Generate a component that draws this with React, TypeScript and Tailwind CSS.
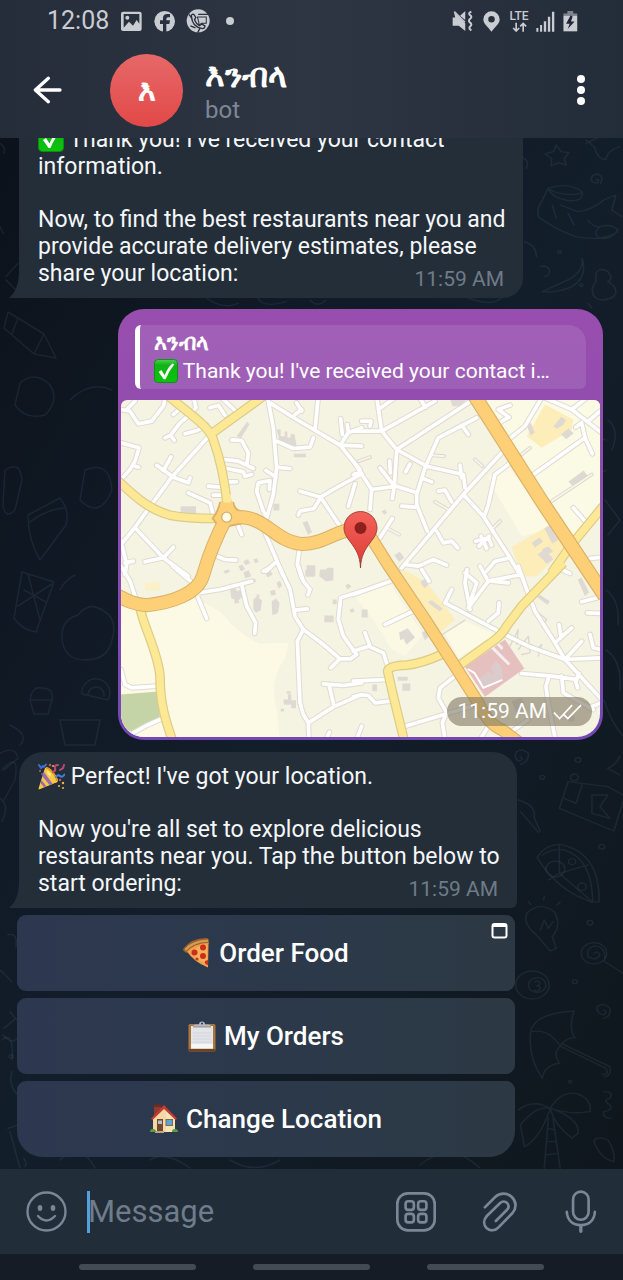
import type { ReactNode } from "react";

type Quadrant = { x: number; y: number; minor: string; yellow?: string; orange?: string; blocks?: string };

const quadrants: Quadrant[] = [
  {
    x: 110,
    y: 395,
    minor:
      "M33 45L60 50L85 88L125 80L160 35L168 5M50 45L75 20M165 130L182 122L210 85L240 60L258 40L250 5M182 122L193 138M190 60L210 42M225 118L262 108L290 92M300 40L325 32L345 62M335 10L375 48M292 130L185 248L70 405L33 450M33 145L87 160L75 200L60 225L33 255M68 213L86 218M140 212L190 248L235 265L240 250M160 228L183 187M235 295L300 325L308 355M295 275L330 278M310 302L338 302M350 262L380 262M365 136L395 138L415 175L410 212M345 195L385 200L430 222M350 222L400 232L405 245L425 240M475 20L490 100L500 220L490 300L470 370M480 25L560 75L690 152L750 225M625 5L615 105M690 152L755 155M690 152L715 115L755 100M692 72L697 120M715 115L712 90M500 140L550 162L600 158L610 130M500 218L540 222M468 228L498 248M478 285L480 258L445 265L440 290L460 350L470 370M755 238L670 285L632 308L570 290M632 308L688 392M632 310L612 342L570 350L565 362M735 268L715 335M75 400L160 490L235 545M160 490L190 458M160 490L105 502M33 440L50 510L45 540M45 505L70 500M320 485L345 495L378 497M383 390L395 420M465 415L495 485L520 545M495 505L468 530M568 465L562 510L575 550M555 60L575 45M560 25L575 50",
    yellow:
      "M170 0C240 60 290 90 308 130C330 190 345 250 352 340M308 115L460 5M20 255C90 320 120 345 180 362C230 372 280 372 320 372",
    orange:
      "M740 402C680 405 640 452 570 448C500 440 470 375 400 368L350 368C322 420 300 470 280 540C265 600 180 625 110 632C70 630 45 615 20 602",
    blocks:
      "M380 125L412 82L418 90L392 132zM500 105l12 0l0 20l12 0l0-14l8 0l0 18l10 0l0-12l12 4l6 34l-50-10zM552 178h36v10h-36zM212 335h46v22h-46zM490 328h18v20h-18zM578 385l14-6l14 34l-12 8zM400 500l14-6l6 12l-14 6zM385 515l12-5l8 14l-12 6zM430 495l10-4l6 10l-10 6zM590 512h26v30h-26zM650 520h20v24h-20zM340 530l16-6l4 8l-14 6z",
  },
  {
    x: 355,
    y: 395,
    minor:
      "M65 5L80 110L-5 110M80 110L125 165L215 215L325 240L330 280M70 45L120 10M80 110L240 20M125 165L345 22M365 70L250 130L210 220L185 300L185 330L217 410M185 295L125 275L50 285L45 345M50 285L-5 200M125 170L118 275M75 220L118 275L112 312M104 200L106 235M200 250L230 262M165 208L152 232M320 92L340 120M140 335L180 338M440 175L325 300L140 520M325 300L385 365L465 490L497 545M467 205L420 240L400 330L388 365M315 212L320 250M250 290L270 287L290 322M245 410L265 445L290 440L308 460M362 440L400 430L410 452M378 425L395 462M402 425L372 455M150 510L190 515L235 495L275 512M395 530L420 500L465 490M460 135L510 95L560 10M432 85L462 68L430 45L465 32M570 10L650 45L740 115M650 45L695 10M700 80L735 50M535 240L690 130L712 178M690 130L680 85L662 98M655 340L690 380M705 492L740 488M75 430L112 372M190 5L212 38M45 95L48 80L20 80M-5 240L15 235",
    yellow: "M745 335L650 450L600 520L590 535",
    orange: "M350 -10L455 155L560 320L650 455L750 605",
    blocks:
      "M285 15h50l-20 20h-22zM595 95l24-28l14 10l-8 14l-20 12zM618 120l22-18l16 14l-22 18zM515 92l12-8l12 30l-12 10zM640 262l46-34l16 22l-44 28zM530 445l24-16l10 12l-24 18zM548 480l20-16l28 30l-20 14zM568 402l16-10l26 44l-18 12zM118 482l16-10l14 18l-16 12zM80 350l10-5l6 10l-8 6zM560 465l20-10l14 16l-18 10z",
  },
  {
    x: 110,
    y: 570,
    minor:
      "M33 -10L60 35L75 80M188 -10L245 38L290 147M265 70L330 60L425 35M395 45L410 110L437 160L434 192M505 -15L540 60L555 140L580 180L640 225L690 268L722 268L740 255L700 200L685 150L692 85L755 65M690 268L662 295M555 122L592 118M580 180L562 215L570 400L580 435L595 460L597 515M595 460L670 412L755 375M640 343L700 348L755 340M657 345L672 410M565 -10L580 35L600 60L594 76M33 300L45 345L65 355L140 350M70 490L110 468L150 450M740 510L755 470M648 510L658 488M460 5L480 -5",
    yellow: "M90 115C100 170 145 250 150 320C150 400 165 450 190 520",
    blocks:
      "M360 60l14-6l8 12l10-6l6 20l-14 14l-20-8zM372 85l12 0l4 14l-14 4zM430 90l10-8l16 10l-4 30l-14 8l-8-10zM485 95l14-8l10 14l-6 30l-16 6zM500 40l10-6l6 14l-10 10zM480 65l14-4l4 14l-14 4zM400 8l16-6l8 18l-18 6zM425 28l12 0l0 10l-12 0zM462 8l18-6l8 12l-14 10zM440 75l8 0l0 10l-8 0zM586 0h28v22h-28zM630 0h40v32l-22 4l-20-16zM643 138h28v20h-28zM668 90h12v14h-12zM706 48l10-6l8 10l-12 8zM720 120l10-4l4 10l-12 4zM520 390l14 0l0-16l10 0l0 18l14 0l0 24l-14 0l0-10l-22 0zM530 365h12v8h-12zM512 418h10v8h-10z",
  },
  {
    x: 355,
    y: 570,
    minor:
      "M-5 75L120 30M90 165L175 125M-5 245L40 230L85 250L98 290M30 190L45 230M-5 335L95 330M-5 382L20 376L40 378L60 400L105 395M300 320L255 355L250 385L275 430L262 460L270 510M150 470L350 410M290 60L270 100L440 190L520 230L630 270L740 390M400 155L430 130L432 100M345 120L330 40L336 0M340 115L400 35L500 15M345 100L365 40L330 10M400 35L375 -10M410 35L460 40M490 -10L515 60L540 125L600 220L630 270L740 265M600 220L650 175M618 200L612 165M630 270L680 215M705 195L715 235L735 240M500 312L590 320L665 330L672 312M582 320L573 350L578 390L600 505M620 320L625 370L660 390L715 420M660 330L668 355M200 0L222 35M680 97L727 85M697 130L740 132M375 510L400 470M465 490L520 450M700 415L738 400M610 -5L645 12",
    yellow: "M625 -20L500 110L455 170Q440 200 400 225L310 290M260 255Q200 282 155 287Q100 288 98 305L115 380L148 515",
    blocks:
      "M20 120h18v24h-18zM132 190l26-14l22 28l-26 22l-8-18l-10 4zM218 98l12-6l34 26l-10 8zM196 38l12-10l14 16l-14 12zM128 322h30v12h-30zM142 342h24v22h-24zM52 345h14v20h-14zM545 82l10-6l30 20l-8 10zM668 30l12-6l22 44l-12 12zM200 190l12-8l8 20l-10 10zM470 395l30-10l14 30l-30 16zM640 440h18v16h-18z",
  },
];

const q = (x: number, y: number) => `translate(${x} ${y}) scale(0.33333)`;

function MapPicture() {
  return (
    <svg
      viewBox="121 400 479 338"
      preserveAspectRatio="xMidYMid slice"
      className="block h-[337px] w-full"
      role="img"
      aria-label="Shared location"
      strokeLinecap="round"
      strokeLinejoin="round"
      fill="none"
    >
      <rect x="121" y="400" width="479" height="338" fill="#f5f3e1" />
      <g transform={q(110, 570)}>
        <path d="M33 100L110 110L250 85L330 125Q390 200 450 222L535 220Q530 270 510 290Q480 350 500 420L510 510H33Z" fill="#fcfae5" />
        <path d="M33 375L145 366L150 448L75 486L33 480Z" fill="#c4d4a6" />
        <path d="M105 38h45v24h-45z" fill="#fcf0c8" />
      </g>
      <g transform={q(355, 395)}>
        <path d="M385 15H740V340L650 440L470 160Z" fill="#fbfae4" />
        <path d="M400 250L450 200L600 400L500 425L420 290Z" fill="#fcfae5" />
        <path d="M515 125L570 30L655 75L650 105L560 160Z" fill="#fcedb9" />
        <path d="M470 458L590 388L630 460L545 545H500Z" fill="#fcedb9" />
      </g>
      <g transform={q(355, 570)}>
        <path d="M0 80L100 35L205 195L150 260L110 240L60 160Z" fill="#fbf9e3" />
        <path d="M130 -10L215 40L300 150L255 190Z" fill="#fcedb9" />
        <path d="M270 190L330 155L425 195L310 265Z" fill="#fcfae5" />
        <path d="M330 292L450 210L508 297L390 382Z" fill="#e6bfbf" />
        <path d="M370 330L400 305L415 320L408 290L425 275L440 290L445 325L390 350Z" fill="#dccbcd" />
        <path d="M410 232L460 282M430 225L440 235" stroke="#f6eeee" strokeWidth="9" />
        <path d="M340 300L358 310L385 355L440 332" stroke="#fff" strokeWidth="6" />
      </g>
      {quadrants.map((p) => (
        <g key={`a${p.x}${p.y}`} transform={q(p.x, p.y)}>
          <path d={p.blocks} fill="#dedad3" />
          <path d={p.minor} stroke="#dfdbd2" strokeWidth="17" />
        </g>
      ))}
      <g transform={q(355, 395)}>
        <path d="M590 320L710 240M360 195L382 215M240 322L280 345M10 200L45 188M230 182L268 185M500 180L525 160M415 400L435 380M95 400L132 420" stroke="#d9d5cc" strokeWidth="11" />
        <path d="M590 320L710 240M360 195L382 215M240 322L280 345M10 200L45 188M230 182L268 185M500 180L525 160M415 400L435 380M95 400L132 420" stroke="#f7f5ea" strokeWidth="6" />
      </g>
      <g transform={q(355, 570)}>
        <path d="M465 230L490 180L485 225M490 240L520 200L525 250L500 255M530 225L545 240L560 225L550 260M550 130L575 150L560 170M262 195L330 152" stroke="#dcd8cf" strokeWidth="4" />
      </g>
      {quadrants.map((p) => (
        <path key={`b${p.x}${p.y}`} transform={q(p.x, p.y)} d={p.minor} stroke="#ffffff" strokeWidth="11" />
      ))}
      {quadrants.map((p) => (
        <path key={`c${p.x}${p.y}`} transform={q(p.x, p.y)} d={p.yellow} stroke="#dccb85" strokeWidth="29" strokeLinecap="butt" />
      ))}
      {quadrants.map((p) => (
        <path key={`d${p.x}${p.y}`} transform={q(p.x, p.y)} d={p.yellow} stroke="#fde995" strokeWidth="22" strokeLinecap="butt" />
      ))}
      <g transform={q(355, 395)} strokeLinecap="butt">
        <path d="M0 402L35 408L100 512L210 675L300 815L370 925Q400 990 440 1005L500 1050" stroke="#dcb168" strokeWidth="38" />
        <path d="M350 -10L455 155L560 320L650 455L750 605" stroke="#dcb168" strokeWidth="44" />
      </g>
      <g transform={q(110, 395)}>
        <path d={quadrants[0].orange} stroke="#dcb168" strokeWidth="42" />
        <path d="M330 325L370 325Q375 350 400 352L405 385L330 400L308 372Q325 350 330 325Z" fill="#fdd078" stroke="#dcb168" strokeWidth="6" />
        <path d={quadrants[0].orange} stroke="#fdd078" strokeWidth="36" />
        <path d="M333 322L368 322L372 350H326Z" fill="#fdd078" />
        <path d="M352 300V324" stroke="#fde995" strokeWidth="22" strokeLinecap="butt" />
        <circle cx="350" cy="368" r="15" fill="#fffbe8" stroke="#d5b26c" strokeWidth="4" />
      </g>
      <g transform={q(355, 395)} strokeLinecap="butt" stroke="#fdd078">
        <path d="M-5 402L35 408L100 512L210 675L300 815L370 925Q400 990 440 1005L500 1050" strokeWidth="31" />
        <path d="M350 -10L455 155L560 320L650 455L750 605" strokeWidth="37" />
      </g>
      <defs>
        <linearGradient id="pin" x1="0" y1="0" x2="0" y2="1">
          <stop offset="0" stopColor="#f4625a" />
          <stop offset="1" stopColor="#dd3c36" />
        </linearGradient>
      </defs>
      <path
        d="M360.500 568C360 556 356 550 350 542C346 537 344 533 344 528.500A16.500 16.500 0 0 1 377 528.500C377 533 375 537 371 542C365 550 361 556 360.500 568Z"
        fill="url(#pin)"
        stroke="#8f2f2b"
        strokeWidth="0.8"
      />
      <circle cx="360.500" cy="528.500" r="6" fill="#8c211c" />
    </svg>
  );
}

function Wallpaper() {
  return (
    <svg
      viewBox="0 138 623 1031"
      preserveAspectRatio="xMidYMax slice"
      className="absolute inset-0 h-full w-full"
      aria-hidden="true"
      fill="none"
      stroke="#56708a"
      strokeOpacity="0.17"
      strokeLinecap="round"
      strokeLinejoin="round"
    >
      <g transform="translate(0 130) scale(0.3973 0.3333)" strokeWidth="4">
        <path d="M1400 45L1412 65L1432 68L1420 85L1425 105L1405 98L1388 108L1388 85L1372 72L1393 65Z" />
        <path d="M1475 30Q1500 50 1500 65Q1510 90 1525 88Q1530 60 1560 50M1475 40Q1500 25 1530 10" />
        <path d="M1500 150Q1510 145 1505 158Q1490 162 1488 148Q1490 132 1505 132Q1520 140 1512 160" />
        <path d="M1380 175Q1430 155 1465 185Q1470 215 1430 212Q1390 205 1380 175L1365 210Q1350 235 1355 260Q1400 300 1450 320Q1520 335 1555 305M1385 180Q1420 200 1462 190M1410 225L1455 245Q1490 240 1520 210L1550 195L1540 240L1565 260M1390 225L1400 265M1430 250L1445 285M1480 270Q1490 290 1510 290Q1540 280 1555 300Q1540 330 1510 325Q1490 310 1510 290" />
        <path d="M1465 385Q1470 430 1420 455L1365 485Q1400 490 1440 470Q1480 440 1465 385M1360 410A16 16 0 1 1 1370 440M1320 335Q1350 345 1350 380M1310 80Q1335 90 1325 115" />
        <path d="M1500 430Q1510 410 1530 425Q1545 445 1530 455Q1560 475 1545 500Q1515 520 1495 500Q1485 475 1500 455Z" />
        <circle cx="1408" cy="366" r="4" />
        <circle cx="1463" cy="465" r="4" />
        <path d="M15 440L45 400M15 450L40 480M0 40Q15 50 10 70M0 290L8 310" />
        <path d="M520 505Q560 540 600 520M650 505Q660 535 720 515M780 510Q800 535 820 510M1180 505Q1240 530 1260 505M1480 520L1490 535" />
      </g>
      <g strokeWidth="1.500">
        <path d="M8 312L44 334L56 358L34 354L4 328ZM44 334L34 354M18 318L12 334" />
        <path d="M20 383Q35 370 50 385Q60 400 45 415Q25 420 15 405ZM70 400Q90 380 112 390" />
        <path d="M5 470Q20 460 22 480L15 510Q5 520 3 505ZM28 515L60 498Q70 510 66 525L40 560Q28 540 28 515ZM30 522Q45 510 64 508M85 470Q110 460 112 490Q100 520 80 500Z" />
        <path d="M22 572L54 582L36 632Q22 630 14 618ZM28 574L40 620M52 584L18 606M24 590L46 602M60 590Q65 580 75 575M62 640Q60 620 78 615Q90 600 105 612Q118 620 112 640Q108 660 85 660Q65 660 62 640Z" />
        <path d="M30 700Q32 686 42 688Q54 688 52 700L48 714H34ZM30 700H52M82 694A14 14 0 1 1 108 700ZM88 694A8 8 0 1 1 104 696M10 725Q30 735 20 745M60 720H100L95 745H65Z" />
        <path d="M608 420Q620 430 612 450M606 440A18 18 0 1 0 606 470M605 500L620 520L608 535M606 590Q620 600 618 625M606 650Q622 660 620 690M604 700Q610 720 622 735" />
        <path d="M2 770Q20 750 15 780L4 800M2 1040Q14 1030 12 1060M60 1160Q80 1140 95 1168M150 1160Q165 1150 190 1168M230 1160Q255 1175 280 1160M420 1165Q450 1140 480 1168" />
      </g>
      <g transform="translate(0 745) scale(0.3973 0.3333)" strokeWidth="4">
        <path d="M1310 35Q1320 45 1305 48Q1292 38 1300 20Q1315 8 1330 25Q1332 50 1310 58M1530 70Q1550 60 1560 35M1530 70L1560 90" />
        <path d="M1430 110L1530 125L1568 150M1430 110L1408 190L1545 258L1568 170M1420 160L1450 175L1465 120M1490 150L1530 150L1510 185L1535 220L1490 205Z" />
        <circle cx="1455" cy="45" r="7" /><circle cx="1365" cy="97" r="6" /><circle cx="1446" cy="97" r="10" /><circle cx="1515" cy="305" r="7" /><circle cx="1485" cy="533" r="7" /><circle cx="1447" cy="710" r="6" />
        <path d="M1305 165Q1350 180 1345 220L1360 260M1310 200L1355 262" />
        <path d="M1352 338Q1370 300 1410 298Q1510 320 1508 470L1490 472L1470 462Q1400 430 1352 338ZM1365 330Q1390 310 1420 315Q1490 340 1492 470M1408 300V385L1380 405M1408 385L1490 470M1408 385L1480 360" />
        <circle cx="1398" cy="372" r="24" /><circle cx="1440" cy="350" r="9" /><circle cx="1465" cy="425" r="11" />
        <path d="M1350 570Q1310 530 1330 500Q1360 470 1395 500Q1415 540 1390 575L1400 610L1385 618L1350 570M1360 555L1370 525L1380 550L1392 530M1330 470L1336 478M1370 455L1368 465M1410 470L1402 480" />
        <circle cx="1495" cy="625" r="32" /><path d="M1495 625Q1505 615 1510 630Q1500 650 1480 635Q1475 605 1500 603Q1525 610 1522 640M1520 648L1568 685" />
        <circle cx="1340" cy="720" r="42" /><circle cx="1352" cy="720" r="22" /><path d="M1345 712A7 7 0 1 1 1350 722A8 8 0 1 1 1345 735" />
        <path d="M0 25Q40 0 45 40L10 75M0 160Q25 180 5 230M20 570Q45 560 40 605M0 675L30 710" />
      </g>
      <g transform="translate(0 985) scale(0.3973 0.3333)" strokeWidth="4">
        <path d="M1445 78Q1340 85 1335 145Q1330 220 1365 280Q1370 240 1408 235Q1390 200 1410 185Q1420 160 1447 158Q1430 130 1445 78ZM1340 140Q1380 130 1410 183M1410 183L1525 250Q1535 270 1515 268M1418 178L1535 245Q1540 275 1520 275" />
        <path d="M1520 75Q1530 80 1520 90Q1500 85 1503 65Q1520 50 1535 70Q1538 95 1520 100" />
        <path d="M1385 370Q1340 340 1305 375M1385 370Q1350 360 1310 420L1320 485Q1360 460 1385 370ZM1385 370Q1410 320 1450 325Q1490 340 1485 380Q1440 390 1385 370Q1460 400 1455 445L1440 460Q1395 420 1385 370ZM1380 400L1370 550M1392 400L1410 550M1378 430L1396 435M1374 470L1400 470M1372 510L1405 505" />
        <path d="M1520 320Q1545 320 1535 340Q1515 345 1535 360Q1545 375 1520 380Q1515 400 1538 400M1495 470Q1500 450 1530 465Q1550 500 1545 530Q1510 520 1495 470" />
        <circle cx="1435" cy="290" r="4" /><circle cx="28" cy="214" r="5" />
        <path d="M10 130L40 100M8 150Q30 180 42 160M25 80L42 105M30 260Q20 300 45 330M20 430L45 420M25 440L50 548M60 520Q70 540 62 545" />
      </g>
    </svg>
  );
}

function CheckEmoji({ className }: { className: string }) {
  return (
    <svg viewBox="0 0 26 26" className={`inline-block ${className}`} role="img" aria-label="Check mark">
      <defs>
        <linearGradient id="check" x1="0" y1="0" x2="0" y2="1">
          <stop offset="0" stopColor="#4ed052" />
          <stop offset="0.25" stopColor="#10b416" />
          <stop offset="1" stopColor="#0bc40b" />
        </linearGradient>
      </defs>
      <rect x="0.500" y="0.500" width="25" height="25" rx="4" fill="url(#check)" stroke="#0a8f10" />
      <path d="M5 14L8 12L11.500 17.500Q15 9 20 5L22 6Q16 13 12.500 22H10.500Z" fill="#fff" />
    </svg>
  );
}

function PartyEmoji() {
  return (
    <svg viewBox="0 0 27 27" className="inline-block size-[27px] align-[-6px]" role="img" aria-label="Party popper">
      <path d="M7 5Q10 3 15 9Q20 15 20 18Q19 20 17 20L1 26.500Q0 26 1 24Z" fill="#f8c843" />
      <path d="M6 9L14.500 20.800L11.500 22L4.500 13.500ZM3.500 17L8.500 23.300L6 24.300L2.500 20Z" fill="#9a6bb0" />
      <path d="M8 5Q11 5 15 10Q19 15 19 18" fill="none" stroke="#e09b24" strokeWidth="2" />
      <path d="M9.500 7L13 11L12 14L9 10Z" fill="#ffe88a" />
      <g fill="none" strokeWidth="2" strokeLinecap="round">
        <path d="M1 2L3 5L5 3M8 1.500L6 4" stroke="#3e6fd8" />
        <path d="M18 14Q20 11 22 13T26.500 11.500" stroke="#3f82e4" />
        <path d="M15 9Q18 8 17 5T20 2" stroke="#c4476e" />
        <path d="M22 7L25 5L26 2" stroke="#b64a7e" />
      </g>
      <g fill="#d6535e"><circle cx="12" cy="2" r="1.200" /><circle cx="22" cy="17" r="1.200" /><circle cx="2" cy="8" r="1" /></g>
      <g fill="#edbd3a"><circle cx="15" cy="3" r="1" /><circle cx="25" cy="20" r="1.200" /><circle cx="21" cy="23" r="1" /><circle cx="25" cy="25" r="1" /></g>
      <circle cx="4" cy="11" r="1" fill="#3e6fd8" />
    </svg>
  );
}

function PizzaEmoji() {
  return (
    <svg viewBox="0 0 28 30" className="h-[30px] w-7" role="img" aria-label="Pizza">
      <path d="M0 11Q8 0 23 0Q26 0 26 3V6Q12 7 5 15Q0 14 0 11Z" fill="#9a5f2b" />
      <path d="M1.500 11Q9 2 25 1.500V4Q11 4 3 13Z" fill="#d09a52" />
      <path d="M4 13.500Q12 5 25.500 5L25 29.500Q11 24 4 13.500Z" fill="#f0a04a" />
      <path d="M8 14Q14 8 24 7V26Q13 22 8 14Z" fill="#f6b05c" />
      <g fill="#c92f1c">
        <circle cx="11.500" cy="14.500" r="3" />
        <circle cx="20" cy="9.500" r="3" />
        <circle cx="20" cy="18" r="3" />
        <path d="M25 22V27Q21 26 22 23Z" />
        <circle cx="14" cy="21" r="1.500" />
      </g>
    </svg>
  );
}

function ClipboardEmoji() {
  return (
    <svg viewBox="0 0 28 31" className="h-[31px] w-7" role="img" aria-label="Clipboard">
      <rect x="0.500" y="3" width="27" height="27.500" rx="1.500" fill="#a9763d" />
      <rect x="0.500" y="28" width="27" height="2.500" rx="1" fill="#6f4321" />
      <path d="M3 5H25V27.500H3Z" fill="#e3e4e8" />
      <path d="M3 23H25V27.500H3Z" fill="#f6f6f8" />
      <path d="M5 12H23M5 15H23M5 18H23M5 21H23" stroke="#cfd1d8" strokeWidth="0.8" />
      <path d="M5 6Q5 3.500 8 3.500H11Q11 0.500 14 0.500T17 3.500H20Q23 3.500 23 6Z" fill="#b5b8be" />
      <circle cx="14" cy="2.600" r="1" fill="#2c394b" />
      <path d="M5 6H23" stroke="#83878f" strokeWidth="0.8" />
    </svg>
  );
}

function HouseEmoji() {
  return (
    <svg viewBox="0 0 28 30" className="h-[30px] w-7" role="img" aria-label="House">
      <path d="M4 1H11V8L4 14Z" fill="#8e3a31" />
      <path d="M3.500 0.500H11.500V3H3.500Z" fill="#6f2a25" />
      <path d="M3 14L14 3L25 14V28H3Z" fill="#f3d9a5" />
      <path d="M16 5L25 14V28H16Z" fill="#f8e3b8" />
      <path d="M1 14.500L13.500 1.500Q14 1 14.500 1.500L27 14.500L25.500 16L14 5L2.500 16Z" fill="#c53a35" />
      <path d="M7 15H13V28H7Z" fill="#7b452d" />
      <path d="M8 16.500H12V20H8Z" fill="#a9c3cf" />
      <path d="M15.500 15H23V22H15.500Z" fill="#8a6742" />
      <path d="M16.500 16H22V21H16.500Z" fill="#57a6d8" />
      <path d="M5 27H14V29H5Z" fill="#b9a48a" />
      <path d="M0 28Q0 24.500 3 25Q6 25 6 28ZM22 28Q22 24.500 25 25Q28 25 28 28Z" fill="#5c9a3c" />
    </svg>
  );
}

function Tail() {
  return (
    <svg viewBox="0 0 12 24" className="absolute bottom-0 -left-2.5 h-6 w-3 text-[#242e39]" aria-hidden="true">
      <path d="M12 24H0Q9 17 10 0H12Z" fill="currentColor" />
    </svg>
  );
}

function BotMessage({ shape, children, time }: { shape: string; children: ReactNode; time: string }) {
  return (
    <article className={`relative ml-[19px] bg-[#242e39] py-[11px] pr-4 pl-[19px] text-[23px] leading-[27px] text-[#f4f7f9] ${shape}`}>
      <Tail />
      {children}
      <time className="float-right mt-[6px] mr-[3px] text-[21px] text-[#6f7b87]">{time}</time>
    </article>
  );
}

function KeyboardButton({ emoji, label, shape, children }: { emoji: ReactNode; label: string; shape: string; children?: ReactNode }) {
  return (
    <button
      type="button"
      className={`relative flex h-[76px] w-full items-center justify-center gap-2 bg-linear-to-r from-[#2d3850] via-[#2c394b] to-[#2c3944] text-[26px] font-medium text-white ${shape}`}
    >
      {emoji}
      {label}
      {children}
    </button>
  );
}

function StatusBar() {
  return (
    <div className="flex h-[42px] items-center pr-[45px] pl-[47px] text-[#c9ccd1]">
      <span className="text-[25px] leading-[42px]">12:08</span>
      <svg viewBox="364 30 63 63" className="ml-3 size-[21px]" aria-hidden="true">
        <path fillRule="evenodd" fill="currentColor" d="M370 32H420Q426 32 426 38V84Q426 90 420 90H370Q364 90 364 84V38Q364 32 370 32ZM372 39V80L388 62L400 74L411 57L419 68V39ZM383 44a6 6 0 1 1 0 12a6 6 0 1 1 0-12Z" />
      </svg>
      <svg viewBox="462 30 63 63" className="ml-3 size-[21px]" aria-hidden="true">
        <circle cx="494" cy="61" r="31" fill="currentColor" />
        <path d="M489 93V69H480V58H489V51Q489 39 502 39H510V49H504Q499 49 499 54V58H510L508 69H499V93Z" fill="#2a313e" />
      </svg>
      <svg viewBox="557 26 71 71" className="ml-[11px] size-6" aria-hidden="true">
        <circle cx="593" cy="61" r="34" fill="currentColor" />
        <g fill="none" stroke="#2a313e" strokeWidth="4">
          <path d="M566 42L583 66M593 42H622M608 64L592 95M570 76L585 82" />
          <path d="M573 47Q573 40 580 42L586 51L582 58Q586 69 597 75L603 70L613 76Q613 83 606 84Q575 80 573 47Z" fill="#c9ccd1" />
          <path d="M591 50H617V68H603L595 74V66Z" fill="#c9ccd1" strokeWidth="3" />
        </g>
      </svg>
      <span className="ml-4 size-2 rounded-full bg-current" />
      <div className="ml-auto flex items-center">
        <svg viewBox="418 28 65 66" className="h-[22px] w-[21px]" aria-hidden="true">
          <path d="M420 50H428L424 34L459 68V92L439 76H420ZM443 45L459 30V58Z" fill="currentColor" />
          <path d="M425 32L458 65" stroke="currentColor" strokeWidth="5" />
          <path d="M478 32Q466 37 474 43Q482 48 474 54Q467 60 474 66Q482 72 474 78Q468 84 478 90" fill="none" stroke="currentColor" strokeWidth="6" />
        </svg>
        <svg viewBox="510 28 52 64" className="ml-2.5 h-[21px] w-[17px]" aria-hidden="true">
          <path fillRule="evenodd" fill="currentColor" d="M536 91C525 76 511 67 511 53A25 24 0 0 1 561 53C561 67 547 76 536 91ZM536 43a10 10 0 1 0 0 20a10 10 0 1 0 0-20Z" />
        </svg>
        <div className="ml-2 flex w-[22px] flex-col items-center">
          <span className="text-[12px] leading-[12px] font-medium">LTE</span>
          <svg viewBox="600 66 44 30" className="h-2.5 w-[15px]" fill="none" stroke="currentColor" strokeWidth="5" aria-hidden="true">
            <path d="M612 68V93M603 84L612 93L621 84M633 95V70M624 79L633 70L642 79" />
          </svg>
        </div>
        <svg viewBox="674 32 56 62" className="ml-1.5 h-[21px] w-[19px]" aria-hidden="true" fill="currentColor">
          <path d="M675 82h6v11h-6zM686 73h6v20h-6zM697 62h7v31h-7zM709 49h7v44h-7zM721 34h7v59h-7z" />
        </svg>
        <svg viewBox="755 28 45 67" className="ml-2 h-[22px] w-[15px]" aria-hidden="true">
          <path d="M756 46V39H768V31H786V39H798V46Z" fill="#7f858e" />
          <path d="M756 46H798V93H756Z" fill="currentColor" />
          <path d="M778 44L764 70H775L769 86L790 63H779L784 48Z" fill="#1f2632" />
        </svg>
      </div>
    </div>
  );
}

export default function App() {
  return (
    <div className="flex h-screen flex-col overflow-hidden bg-[#111a25] font-[Roboto,'Noto_Sans','DejaVu_Sans',sans-serif]">
      <header className="shrink-0 bg-linear-to-r from-[#262d3a] via-[#2e3543] to-[#232c39]">
        <StatusBar />
        <div className="flex h-24 items-center pr-[30px] pl-[33px]">
          <button type="button" aria-label="Back" className="text-white">
            <svg viewBox="100 228 87 84" className="h-7 w-[29px]" fill="none" stroke="currentColor" strokeWidth="10" strokeLinecap="round" strokeLinejoin="round">
              <path d="M146 235L107 270L146 305M109 270H181" />
            </svg>
          </button>
          <div className="ml-12 flex size-[73px] shrink-0 items-center justify-center rounded-full bg-linear-to-b from-[#e66868] to-[#e24848] text-[30px] font-bold text-white">
            እ
          </div>
          <div className="ml-[22px] flex flex-col pt-1">
            <h1 className="text-[33px] leading-9 font-bold text-white">እንብላ</h1>
            <p className="text-[24px] leading-8 text-[#7d8895]">bot</p>
          </div>
          <button type="button" aria-label="More options" className="ml-auto flex w-6 flex-col items-center gap-[3px] py-2">
            <span className="size-2 rounded-full bg-white" />
            <span className="size-2 rounded-full bg-white" />
            <span className="size-2 rounded-full bg-white" />
          </button>
        </div>
      </header>

      <main className="relative flex min-h-0 flex-1 flex-col justify-end overflow-hidden bg-linear-to-br from-[#0c121b] via-[#131e2b] to-[#0f171d]">
        <Wallpaper />
        <div className="relative flex flex-col pb-3">
          <div className="w-full max-w-[523px]">
            <BotMessage shape="rounded-t-[20px] rounded-br-[20px]" time="11:59 AM">
              <p>
                <CheckEmoji className="size-[26px] align-[-5px]" /> Thank you! I've received your contact information.
              </p>
              <p className="mt-[26px] inline-block">
                Now, to find the best restaurants near you and provide accurate delivery estimates, please
              </p>
              <span>share your location:</span>
            </BotMessage>
          </div>

          <article className="mt-[11px] mr-5 ml-auto w-full max-w-[485px] rounded-[26px] bg-linear-to-b from-[#984eae] via-[#8a4bb0] to-[#7347b4] px-[3px] pt-4 pb-[3px] text-white">
            <blockquote className="mx-3.5 flex h-16 flex-col justify-center overflow-hidden rounded-l-md rounded-tr-[18px] rounded-br-md border-l-[5px] border-white bg-white/10 pl-3.5">
              <cite className="text-[22px] leading-7 font-bold not-italic">እንብላ</cite>
              <p className="truncate text-[21px] leading-7">
                <CheckEmoji className="size-6 align-[-5px]" /> Thank you! I've received your contact i…
              </p>
            </blockquote>
            <div className="relative mt-[11px] overflow-hidden rounded-t-md rounded-b-[23px]">
              <MapPicture />
              <div className="absolute right-2 bottom-[11px] flex h-[29px] items-center gap-1.5 rounded-full bg-[#7e7662]/60 px-2.5">
                <time className="text-[21px] leading-none">11:59 AM</time>
                <svg viewBox="593 402 88 48" className="h-4 w-[29px]" fill="none" stroke="currentColor" strokeWidth="5" aria-label="Read">
                  <path d="M596 428L613 446L651 405M625 433L638 446L678 405" />
                </svg>
              </div>
            </div>
          </article>

          <div className="mt-3 w-full max-w-[517px]">
            <BotMessage shape="rounded-t-[24px] rounded-br-md" time="11:59 AM">
              <p>
                <PartyEmoji /> Perfect! I've got your location.
              </p>
              <p className="mt-[26px] inline-block">
                Now you're all set to explore delicious restaurants near you. Tap the button below to
              </p>
              <span>start ordering:</span>
            </BotMessage>
          </div>

          <div className="mt-[7px] ml-[17px] flex w-full max-w-[498px] flex-col gap-[7px]">
            <KeyboardButton emoji={<PizzaEmoji />} label="Order Food" shape="rounded-[9px]">
              <svg viewBox="0 0 17 17" className="absolute top-[7px] right-[7px] size-[17px]" fill="none" aria-hidden="true">
                <rect x="1.500" y="2" width="14" height="13.500" rx="2" stroke="#fff" strokeWidth="2" />
                <path d="M1.500 2H15.500V5H1.500Z" fill="#fff" />
              </svg>
            </KeyboardButton>
            <KeyboardButton emoji={<ClipboardEmoji />} label="My Orders" shape="rounded-[9px]" />
            <KeyboardButton emoji={<HouseEmoji />} label="Change Location" shape="rounded-t-[9px] rounded-b-[26px]" />
          </div>
        </div>
      </main>

      <form className="flex h-[85px] shrink-0 items-center bg-[#222d3a] pr-[25px] pl-[26px] text-[#7a8796]" onSubmit={(e) => e.preventDefault()}>
        <button type="button" aria-label="Emoji">
          <svg viewBox="79 96 123 123" className="size-[41px]" fill="none" stroke="currentColor" strokeWidth="7" strokeLinecap="round">
            <circle cx="140.500" cy="157.500" r="57" />
            <path d="M115 171Q140 198 166 171" />
            <g fill="currentColor" stroke="none">
              <ellipse cx="121" cy="147" rx="7" ry="9" />
              <ellipse cx="160" cy="147" rx="7" ry="9" />
            </g>
          </svg>
        </button>
        <span className="ml-5 h-[42px] w-[3px] shrink-0 bg-[#559fdb]" />
        <input
          type="text"
          aria-label="Message"
          placeholder="Message"
          className="-ml-0.5 h-12 min-w-0 flex-1 bg-transparent text-[31px] outline-none placeholder:text-[#6f7c8a]"
        />
        <div className="flex items-center gap-[46px]">
          <button type="button" aria-label="Commands">
            <svg viewBox="252 97 121 121" className="size-10" fill="none" stroke="currentColor" strokeWidth="8">
              <rect x="256" y="101" width="113" height="112" rx="32" />
              <rect x="281" y="125" width="25" height="26" rx="8" />
              <rect x="319" y="125" width="25" height="26" rx="8" />
              <rect x="281" y="163" width="25" height="26" rx="8" />
              <rect x="319" y="163" width="25" height="26" rx="8" />
            </svg>
          </button>
          <button type="button" aria-label="Attach">
            <svg viewBox="509 97 107 120" className="h-10 w-9" fill="none" stroke="currentColor" strokeWidth="8" strokeLinecap="round">
              <path d="M517 143L548 112C563 98 585 99 598 112C613 127 612 146 600 160L558 203C548 214 532 215 522 205C512 194 513 180 523 169L563 130C569 124 578 124 584 130C590 137 589 145 583 151L550 184" />
            </svg>
          </button>
          <button type="button" aria-label="Record voice">
            <svg viewBox="760 92 102 130" className="h-[43px] w-[34px]" fill="none" stroke="currentColor" strokeWidth="8" strokeLinecap="round">
              <rect x="787" y="97" width="47" height="85" rx="23.500" />
              <path d="M768 158C770 184 787 198 810.500 198C834 198 851 184 853 158" />
              <path d="M810.500 200V217" strokeWidth="10" />
            </svg>
          </button>
        </div>
      </form>

      <nav aria-label="System" className="flex h-[26px] shrink-0 items-center justify-center gap-[57px] bg-[#151c25]">
        <button type="button" aria-label="Recents" className="h-1.5 w-[117px] rounded-full bg-[#444a53]" />
        <button type="button" aria-label="Home" className="h-1.5 w-[117px] rounded-full bg-[#444a53]" />
        <button type="button" aria-label="Back" className="h-1.5 w-[117px] rounded-full bg-[#444a53]" />
      </nav>
    </div>
  );
}
